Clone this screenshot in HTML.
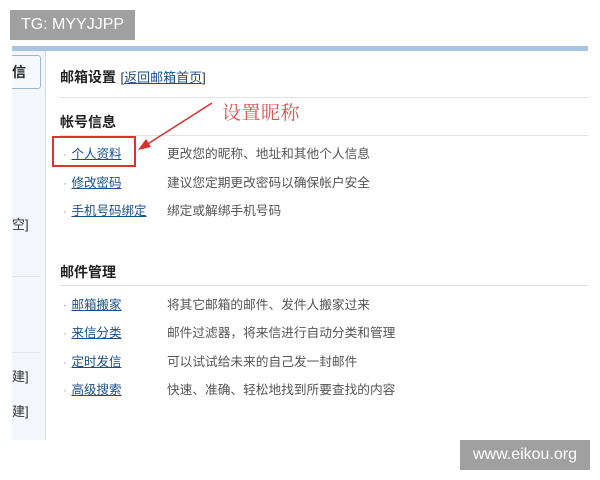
<!DOCTYPE html>
<html><head><meta charset="utf-8"><style>
body{margin:0;width:600px;height:480px;background:#fff;position:relative;overflow:hidden;font-family:"Liberation Sans","Noto Sans CJK SC",sans-serif}
.a{position:absolute;white-space:nowrap}
.wm{position:absolute;background:#a0a0a0;color:#fff;font-size:16px;line-height:30px;text-align:center}
.lk{color:#1a4f8c;text-decoration:underline;font-size:12.5px}
.ds{color:#555;font-size:12.7px}
.dot{color:#999;font-size:12px}
h{font-weight:bold;font-size:14px;color:#222}
</style></head><body>
<div class="a" style="left:12px;top:46px;width:576px;height:5px;background:#a9c4e2"></div>
<div class="a" style="left:12px;top:51px;width:33px;height:389px;background:#f3f6fa;border-right:1px solid #cfdbe8"></div>
<div class="a" style="left:12px;top:55px;width:28px;height:32px;background:#f7f9fc;border:1px solid #9fb6d0;border-left:none;border-radius:0 3px 3px 0"></div>
<div class="a" style="left:12px;top:62px;font-size:14px;color:#222;font-weight:bold">信</div>
<div class="a" style="left:12px;top:276px;width:28px;height:1px;background:#dde4ec"></div>
<div class="a" style="left:12px;top:352px;width:28px;height:1px;background:#dde4ec"></div>
<div class="a" style="left:12px;top:214px;font-size:13px;color:#333">空]</div>
<div class="a" style="left:12px;top:366px;font-size:13px;color:#333">建]</div>
<div class="a" style="left:12px;top:401px;font-size:13px;color:#333">建]</div>

<div class="a" style="left:60px;top:67px"><h>邮箱设置</h> <span style="font-size:13px;color:#333">[<span class="lk" style="font-size:13px">返回邮箱首页</span>]</span></div>
<div class="a" style="left:60px;top:97px;width:528px;height:1px;background:#e3e3e3"></div>
<div class="a" style="left:60px;top:112px"><h>帐号信息</h></div>
<div class="a" style="left:60px;top:135px;width:528px;height:1px;background:#e3e3e3"></div>
<div class="a" style="left:222px;top:98px;font-family:'Noto Serif CJK SC',serif;font-size:19px;color:#d9534f;letter-spacing:0.5px">设置昵称</div>
<svg class="a" style="left:0;top:0" width="600" height="480"><line x1="212" y1="103" x2="146" y2="145" stroke="#d9302c" stroke-width="1.5"/><polygon points="138,150 146,139 151,147" fill="#d9302c"/><rect x="53" y="137" width="82" height="29" fill="none" stroke="#e03030" stroke-width="2"/></svg>

<div class="a" style="left:63px;top:143px"><span class="dot">·</span> <span class="lk">个人资料</span></div>
<div class="a ds" style="left:167px;top:143px">更改您的昵称、地址和其他个人信息</div>
<div class="a" style="left:63px;top:172px"><span class="dot">·</span> <span class="lk">修改密码</span></div>
<div class="a ds" style="left:167px;top:172px">建议您定期更改密码以确保帐户安全</div>
<div class="a" style="left:63px;top:200px"><span class="dot">·</span> <span class="lk">手机号码绑定</span></div>
<div class="a ds" style="left:167px;top:200px">绑定或解绑手机号码</div>

<div class="a" style="left:60px;top:262px"><h>邮件管理</h></div>
<div class="a" style="left:60px;top:285px;width:528px;height:1px;background:#e3e3e3"></div>
<div class="a" style="left:63px;top:294px"><span class="dot">·</span> <span class="lk">邮箱搬家</span></div>
<div class="a ds" style="left:167px;top:294px">将其它邮箱的邮件、发件人搬家过来</div>
<div class="a" style="left:63px;top:322px"><span class="dot">·</span> <span class="lk">来信分类</span></div>
<div class="a ds" style="left:167px;top:322px">邮件过滤器，将来信进行自动分类和管理</div>
<div class="a" style="left:63px;top:351px"><span class="dot">·</span> <span class="lk">定时发信</span></div>
<div class="a ds" style="left:167px;top:351px">可以试试给未来的自己发一封邮件</div>
<div class="a" style="left:63px;top:379px"><span class="dot">·</span> <span class="lk">高级搜索</span></div>
<div class="a ds" style="left:167px;top:379px">快速、准确、轻松地找到所要查找的内容</div>

<div class="wm" style="left:10px;top:10px;width:125px">TG: MYYJJPP</div>
<div class="wm" style="left:460px;top:440px;width:130px">www.eikou.org</div>
</body></html>
